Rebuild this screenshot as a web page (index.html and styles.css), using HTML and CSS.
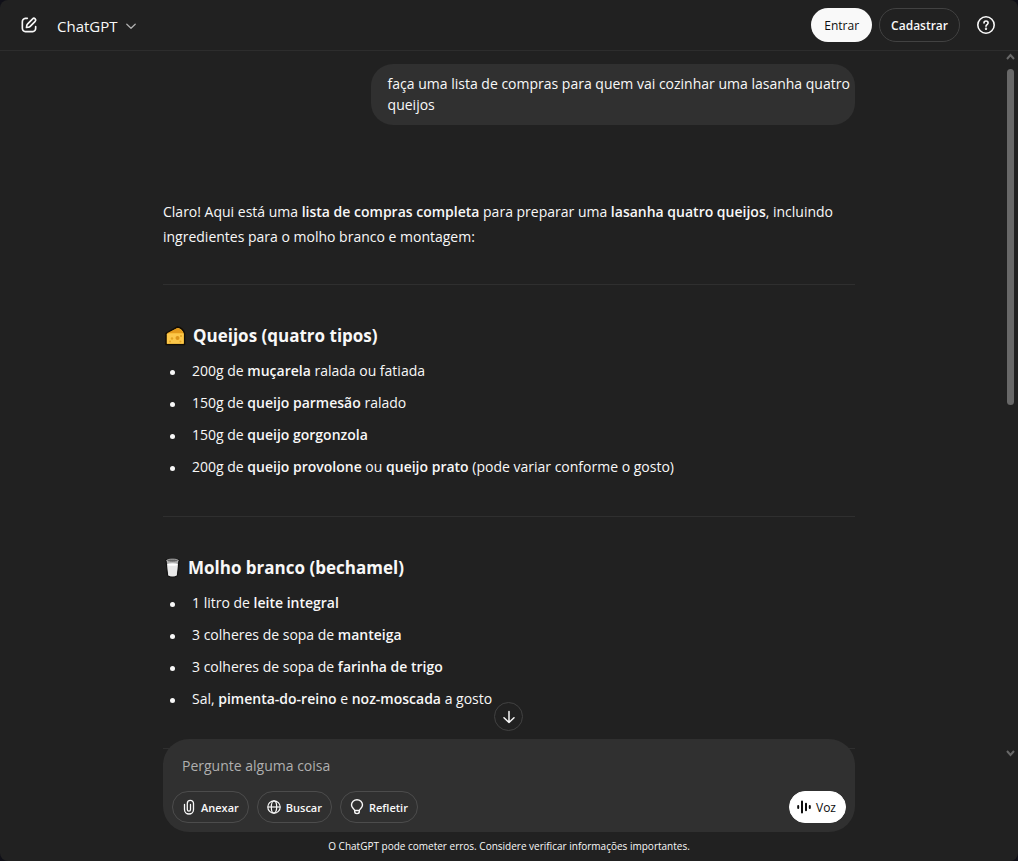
FILE: index.html
```html
<!DOCTYPE html>
<html lang="pt-BR">
<head>
<meta charset="utf-8">
<meta name="viewport" content="width=device-width, initial-scale=1">
<title>ChatGPT</title>
<link rel="stylesheet" href="styles.css">
</head>
<body>
<div class="app">
  <header class="topbar">
    <button class="icon-button" type="button" aria-label="Novo chat">
      <svg width="20" height="20" viewBox="0 0 24 24" fill="currentColor"><path d="M15.673 3.913a3.121 3.121 0 1 1 4.414 4.414l-5.937 5.937a5 5 0 0 1-2.828 1.415l-2.18.31a1 1 0 0 1-1.132-1.13l.311-2.18A5 5 0 0 1 9.736 9.85zm3 1.414a1.121 1.121 0 0 0-1.586 0l-5.937 5.937a3 3 0 0 0-.849 1.697l-.123.86.86-.122a3 3 0 0 0 1.698-.849l5.937-5.937a1.121 1.121 0 0 0 0-1.586M11 4a1 1 0 0 1-1 1c-.998 0-1.702.008-2.253.06-.54.052-.862.141-1.109.267a3 3 0 0 0-1.311 1.311c-.134.263-.226.611-.276 1.216C5.001 8.471 5 9.264 5 10.4v3.2c0 1.137 0 1.929.051 2.546.05.605.142.953.276 1.216a3 3 0 0 0 1.311 1.311c.263.134.611.226 1.216.276.617.05 1.41.051 2.546.051h3.2c1.137 0 1.929 0 2.546-.051.605-.05.953-.142 1.216-.276a3 3 0 0 0 1.311-1.311c.126-.247.215-.569.266-1.108.053-.552.06-1.256.06-2.255a1 1 0 1 1 2 .002c0 .978-.006 1.78-.069 2.442-.064.673-.192 1.27-.475 1.827a5 5 0 0 1-2.185 2.185c-.592.302-1.232.428-1.961.487C15.6 21 14.727 21 13.643 21h-3.286c-1.084 0-1.958 0-2.666-.058-.728-.06-1.369-.185-1.96-.487a5 5 0 0 1-2.186-2.185c-.302-.592-.428-1.233-.487-1.961C3 15.6 3 14.727 3 13.643v-3.286c0-1.084 0-1.958.058-2.666.06-.729.185-1.369.487-1.961A5 5 0 0 1 5.73 3.545c.556-.284 1.154-.411 1.827-.475C8.22 3.007 9.021 3 10 3a1 1 0 0 1 1 1"/></svg>
    </button>
    <button class="model" type="button">ChatGPT
      <svg width="12" height="12" viewBox="0 0 12 12" fill="none" stroke="currentColor" stroke-width="1.3" stroke-linecap="round" stroke-linejoin="round"><path d="M1.8 4.2 6 8.2l4.2-4"/></svg>
    </button>
    <div class="account">
      <button class="pill pill-light" type="button">Entrar</button>
      <button class="pill pill-outline" type="button">Cadastrar</button>
      <button class="help" type="button" aria-label="Ajuda">
        <svg width="20" height="20" viewBox="0 0 20 20" fill="none" stroke="currentColor" stroke-width="1.6" stroke-linecap="round" stroke-linejoin="round"><circle cx="10" cy="10" r="8.2"/><path d="M8 8C8 6.600 9 6 10 6s2.100.7 2.100 2C12.100 9.500 10 9.600 10 11.200"/><circle cx="10" cy="13.700" r=".4" fill="currentColor"/></svg>
      </button>
    </div>
  </header>

  <main class="thread">
    <div class="column">
      <p class="bubble">faça uma lista de compras para quem vai cozinhar uma lasanha quatro queijos</p>
      <article class="answer">
        <p>Claro! Aqui está uma <strong>lista de compras completa</strong> para preparar uma <strong>lasanha quatro queijos</strong>, incluindo ingredientes para o molho branco e montagem:</p>
        <hr>
        <h3>
          <svg width="24" height="22" viewBox="0 0 24 22" aria-hidden="true"><path d="M3 8.500 14.500 2Q20 3 21.500 8.500V19.500H3z" fill="#f9bd2e" stroke="#130d05" stroke-width="1.500" stroke-linejoin="round"/><path d="M4 8.300 14.400 2.900Q19 4 20.600 8.300z" fill="#e39a1c"/><path d="M4 8.500h16.700v10.200H4z" fill="#fcc74a"/><circle cx="14.500" cy="13" r="2" fill="#dc951a"/><circle cx="9" cy="13.500" r="1.200" fill="#e4a321"/><circle cx="18" cy="11" r="1" fill="#e4a321"/><circle cx="7" cy="16.500" r="1" fill="#e4a321"/><circle cx="17.500" cy="16.500" r="1" fill="#e4a321"/></svg>
          Queijos (quatro tipos)</h3>
        <ul>
          <li>200g de <strong>muçarela</strong> ralada ou fatiada</li>
          <li>150g de <strong>queijo parmesão</strong> ralado</li>
          <li>150g de <strong>queijo gorgonzola</strong></li>
          <li>200g de <strong>queijo provolone</strong> ou <strong>queijo prato</strong> (pode variar conforme o gosto)</li>
        </ul>
        <hr>
        <h3>
          <svg width="19" height="22" viewBox="0 0 19 22" aria-hidden="true"><path d="M3 3h13l-1.500 15q-.3 2-5 2t-5-2z" fill="#a9a9a9" stroke="#111" stroke-width="1.200"/><path d="M4.200 7h10.600l-1.100 11q-.7 1.200-4.200 1.200T5.300 18z" fill="#e9e9e9"/><ellipse cx="9.500" cy="3.600" rx="5.800" ry="1.500" fill="#666" stroke="#ccc" stroke-width=".7"/><ellipse cx="9.500" cy="7.500" rx="5" ry="1.300" fill="#fff"/></svg>
          Molho branco (bechamel)</h3>
        <ul>
          <li>1 litro de <strong>leite integral</strong></li>
          <li>3 colheres de sopa de <strong>manteiga</strong></li>
          <li>3 colheres de sopa de <strong>farinha de trigo</strong></li>
          <li>Sal, <strong>pimenta-do-reino</strong> e <strong>noz-moscada</strong> a gosto</li>
        </ul>
        <hr>
      </article>
    </div>
    <div class="scrollbar" aria-hidden="true">
      <svg width="9" height="8" viewBox="0 0 9 8" fill="none" stroke="currentColor" stroke-width="2"><path d="m1 6 3.500-4L8 6"/></svg>
      <div class="track"><div class="thumb"></div></div>
      <svg width="9" height="8" viewBox="0 0 9 8" fill="none" stroke="currentColor" stroke-width="2"><path d="m1 2 3.500 4L8 2"/></svg>
    </div>
  </main>

  <footer class="dock">
    <button class="jump" type="button" aria-label="Ir para o final">
      <svg width="16" height="16" viewBox="0 0 16 16" fill="none" stroke="currentColor" stroke-width="1.500" stroke-linecap="round" stroke-linejoin="round"><path d="M8 2.500v11M3 8.800l5 4.700 5-4.700"/></svg>
    </button>
    <form class="composer">
      <input class="prompt" type="text" aria-label="Mensagem" placeholder="Pergunte alguma coisa">
      <div class="tools">
        <button class="tool" type="button">
          <svg width="14" height="16" viewBox="0 0 14 16" fill="none" stroke="currentColor" stroke-width="1.300" stroke-linecap="round"><path d="M2.500 5.500v5a4.500 4.500 0 0 0 9 0v-6a3.100 3.100 0 0 0-6.200 0v6a1.600 1.600 0 0 0 3.200 0v-5"/></svg>
          Anexar</button>
        <button class="tool" type="button">
          <svg width="14" height="16" viewBox="0 0 14 16" fill="none" stroke="currentColor" stroke-width="1.200"><circle cx="7" cy="8" r="6.200"/><ellipse cx="7" cy="8" rx="2.700" ry="6.200"/><path d="M.8 8h12.400"/></svg>
          Buscar</button>
        <button class="tool" type="button">
          <svg width="14" height="16" viewBox="0 0 14 16" fill="none" stroke="currentColor" stroke-width="1.400" stroke-linejoin="round"><path d="M4.700 11.500C4.500 9.800 1.500 9 1.500 6a5.500 5.300 0 0 1 11 0c0 3-3 3.800-3.200 5.500zM4.700 11.500v1.300q0 1.800 2.300 1.800t2.300-1.800v-1.300"/></svg>
          Refletir</button>
        <button class="tool voice" type="button">
          <svg width="14" height="14" viewBox="0 0 14 14" fill="none" stroke="currentColor" stroke-width="2" stroke-linecap="round"><path d="M1.200 6v2M5 1.500v11M9 3.800v6.400M12.800 6v2"/></svg>
          Voz</button>
      </div>
    </form>
    <p class="notice">O ChatGPT pode cometer erros. Considere verificar informações importantes.</p>
  </footer>
</div>
</body>
</html>
```
FILE: styles.css
```css
* { box-sizing: border-box; }

body {
  margin: 0;
  background: #101018;
  color: #f8f8f8;
  font: 14px/21px "Open Sans", "Noto Sans", sans-serif;
}

button, input { font: inherit; color: inherit; }
button { padding: 0; border: 0; background: none; cursor: pointer; }
svg { display: block; flex: none; }
p, h3, ul { margin: 0; }
strong { font-weight: 600; }

.app {
  display: flex;
  flex-direction: column;
  height: 100vh;
  overflow: hidden;
  border-radius: 8px;
  background: #212121;
}

.topbar {
  display: flex;
  flex: none;
  align-items: center;
  height: 51px;
  padding: 0 22px 0 19px;
  border-bottom: 1px solid #2d2d2d;
}

.model {
  display: flex;
  align-items: center;
  gap: 7px;
  margin-left: 18px;
  padding-top: 2px;
  font-size: 15px;
}
.model svg { color: #afafaf; }

.account {
  display: flex;
  align-items: center;
  gap: 7px;
  margin-left: auto;
}
.pill {
  height: 34px;
  padding: 0 12px;
  border: 1px solid transparent;
  border-radius: 17px;
  font-size: 12px;
  font-weight: 600;
}
.pill-light { background: #f9f9f9; color: #0d0d0d; font-weight: 500; }
.pill-outline { padding: 0 11px; border-color: #424242; }
.help { margin-left: 9px; }

.thread {
  position: relative;
  flex: 1;
  min-height: 0;
  overflow: hidden;
}
.column {
  max-width: 724px;
  margin: 0 auto;
  padding: 13px 16px 0;
}
.bubble {
  width: 70%;
  margin-left: auto;
  padding: 9px 4px 10px 17px;
  border-radius: 22px;
  background: #303030;
}
.answer {
  padding-top: 74px;
  line-height: 25px;
}
.answer hr {
  height: 1px;
  margin: 33px 0 36px;
  border: 0;
  background: #2f2f2f;
}
.answer p + hr { margin: 35px 0 36px; }
.answer h3 {
  display: flex;
  align-items: center;
  gap: 6px;
  font-size: 17px;
  line-height: 30px;
  font-weight: 700;
}
.answer ul {
  padding: 4px 0 0 7px;
  line-height: 32px;
  list-style: none;
}
.answer li::before {
  content: "";
  display: inline-block;
  width: 5px;
  height: 5px;
  margin-right: 17px;
  border-radius: 50%;
  background: currentColor;
  vertical-align: middle;
}

.scrollbar {
  position: absolute;
  inset: 2px 3px 3px auto;
  display: flex;
  flex-direction: column;
  align-items: center;
  gap: 8px;
  width: 9px;
  color: #686868;
}
.track { flex: 1; width: 7px; }
.thumb { height: 50%; border-radius: 4px; background: #686868; }

.dock {
  position: relative;
  flex: none;
  margin-top: -21px;
  padding: 0 16px 4px;
}
.jump {
  position: absolute;
  top: -37px;
  left: 50%;
  display: grid;
  place-items: center;
  width: 29px;
  height: 29px;
  margin-left: -15px;
  border: 1px solid #424242;
  border-radius: 50%;
  background: #212121;
}
.composer {
  max-width: 692px;
  margin: 0 auto;
  padding: 10px 9px 9px;
  border-radius: 26px;
  background: #303030;
}
.prompt {
  display: block;
  width: 100%;
  height: 32px;
  padding: 0 10px;
  border: 0;
  outline: 0;
  background: none;
}
.prompt::placeholder { color: #afafaf; opacity: 1; }
.tools { display: flex; gap: 8px; margin-top: 10px; }
.tool {
  display: flex;
  align-items: center;
  gap: 5px;
  height: 32px;
  padding: 0 9px;
  border: 1px solid #4c4c4c;
  border-radius: 16px;
  font-size: 11px;
  font-weight: 600;
}
.voice {
  margin-left: auto;
  padding: 0 9px 0 7px;
  border-color: #fff;
  background: #fff;
  color: #0d0d0d;
  font-size: 12px;
  font-weight: 500;
}
.notice {
  padding-top: 4px;
  font-size: 10px;
  text-align: center;
}
```
